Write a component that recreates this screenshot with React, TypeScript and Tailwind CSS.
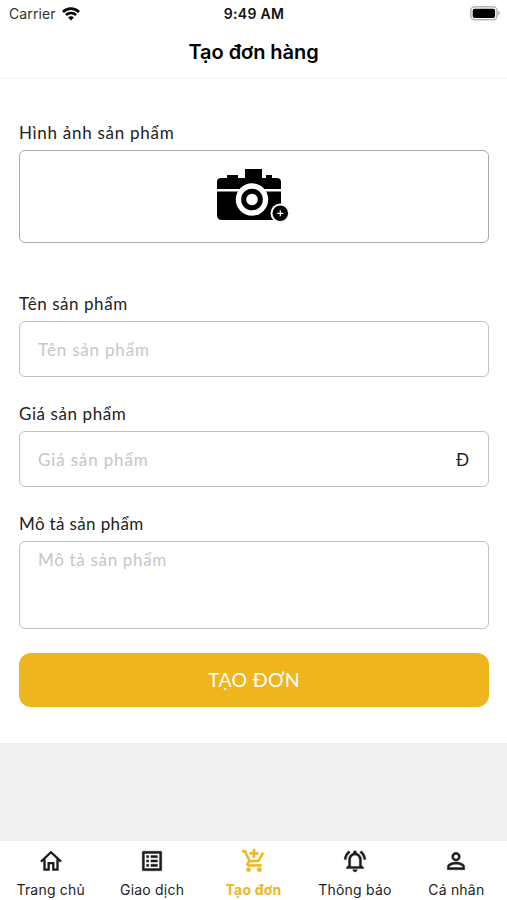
import type { ReactNode } from "react";
import {
  MdOutlineAddShoppingCart,
  MdOutlineListAlt,
  MdOutlineNotificationsActive,
  MdPersonOutline,
} from "react-icons/md";

function StatusBar() {
  return (
    <div className="flex h-[27px] items-center justify-between pr-[6px] pl-[9px] text-[14px] leading-[27px]">
      <div className="flex flex-1 items-center gap-[6px]">
        <span className="tracking-[0.1px] text-[#333]">Carrier</span>
        <svg width="18" height="14" viewBox="0 0 18 14" fill="none" stroke="#000" strokeWidth="2.7">
          <path d="M1 4.9C5.5.6 12.5.6 17 4.9" />
          <path d="M3.9 8C6.8 5.3 11.2 5.3 14.1 8" />
          <path d="M6.2 10.4c1.6-1.5 4-1.5 5.6 0L9 13.4z" fill="#000" stroke="none" />
        </svg>
      </div>
      <span className="mr-[2px] font-semibold tracking-[0.3px] text-[#111]">9:49 AM</span>
      <div className="flex flex-1 justify-end">
        <svg width="31" height="15" viewBox="0 0 31 15">
          <rect x="0.8" y="0.8" width="26.2" height="13" rx="4" fill="#fff" stroke="#b5b5b5" strokeWidth="1.6" />
          <rect x="2.7" y="2.7" width="22.4" height="9.2" rx="2" fill="#000" />
          <path d="M28.3 5c2 .5 2 4.100 0 4.600z" fill="#aaa" />
        </svg>
      </div>
    </div>
  );
}

function CameraIcon() {
  return (
    <svg width="74" height="56" viewBox="0 0 74 56" className="relative -left-px">
      <path
        d="M1 20V13q0-4 4-4h6V6h11v3h7V0h17v9h4V6h6v3h5q4 0 4 4v7zM1 22.500h64V46q0 5-5 5H6q-5 0-5-5z"
        fill="#000"
      />
      <circle cx="36" cy="30.500" r="16.200" fill="#fff" />
      <circle cx="36" cy="30.500" r="8.300" fill="none" stroke="#000" strokeWidth="5" />
      <circle cx="64.300" cy="44.300" r="9.800" fill="#fff" />
      <circle cx="64.300" cy="44.300" r="7.800" fill="#000" />
      <path d="M61.300 44.300h6M64.300 41.300v6" stroke="#fff" strokeWidth="1.200" />
    </svg>
  );
}

function HomeIcon() {
  return (
    <svg width="28" height="28" viewBox="0 0 28 28" fill="none" stroke="currentColor" strokeWidth="2.5">
      <path d="M3.200 14.600 14 4.600l10.800 10" />
      <path d="M7 12v11.300h4.500v-7h5v7H21V12" />
    </svg>
  );
}

function Field({ label, labelClass, children }: { label: string; labelClass: string; children: ReactNode }) {
  return (
    <div>
      <div className={`h-[28px] text-[17px] leading-[22px] text-[#222] ${labelClass}`}>{label}</div>
      {children}
    </div>
  );
}

const box = "rounded-[6px] border border-[#c2c2c2] text-[17px] text-[#c6c6c6]";

// The icon set's invisible bounding path must stay unstroked.
const heavier = "stroke-current stroke-[0.4] [&_path[fill=none]]:stroke-none";

function Tab({ icon, label, active }: { icon: ReactNode; label: string; active?: boolean }) {
  return (
    <div className={`flex flex-1 flex-col items-center ${active ? "font-bold text-[#efb61f]" : "text-[#1c1c1c]"}`}>
      {icon}
      <span className="mt-[6px] text-[14px] leading-[20px] tracking-[0.2px] whitespace-nowrap">{label}</span>
    </div>
  );
}

export default function App() {
  return (
    <div className="flex h-[900px] w-[507px] flex-col overflow-hidden bg-[#f0f0f0] font-['Inter','Liberation_Sans',sans-serif] text-black">
      <header className="h-[79px] border-b border-[#f3f3f3] bg-white">
        <StatusBar />
        <h1 className="text-center text-[20px] leading-[51px] font-semibold tracking-[-0.05px]">Tạo đơn hàng</h1>
      </header>
      <main className="h-[664px] bg-white pt-[43px] pr-[18px] pl-[19px] font-['Lato','Open_Sans',sans-serif]">
        <Field label="Hình ảnh sản phẩm" labelClass="tracking-[0.72px]">
          <div className="flex h-[93px] justify-center rounded-[6px] border border-[#aaa] pt-[18px]">
            <CameraIcon />
          </div>
        </Field>
        <div className="mt-[50px]">
          <Field label="Tên sản phẩm" labelClass="tracking-[0.55px]">
            <div className={`flex h-[56px] items-center px-[18px] pt-px ${box}`}>
              <span className="tracking-[0.8px]">Tên sản phẩm</span>
            </div>
          </Field>
        </div>
        <div className="mt-[26px]">
          <Field label="Giá sản phẩm" labelClass="tracking-[0.58px]">
            <div className={`flex h-[56px] items-center justify-between pr-[19px] pl-[18px] pt-px ${box}`}>
              <span className="tracking-[0.85px]">Giá sản phẩm</span>
              <span className="text-[#222]">Đ</span>
            </div>
          </Field>
        </div>
        <div className="mt-[26px]">
          <Field label="Mô tả sản phẩm" labelClass="tracking-[0.36px]">
            <div className={`h-[88px] px-[18px] pt-[7px] leading-[22px] ${box}`}>
              <span className="tracking-[0.68px]">Mô tả sản phẩm</span>
            </div>
          </Field>
        </div>
        <button className="mt-[24px] block h-[54px] w-full rounded-[12px] bg-[#eeb51f] text-[19.5px] tracking-[0.3px] text-white">
          TẠO ĐƠN
        </button>
      </main>
      <nav className="mt-auto flex h-[59px] bg-white pt-[7px]">
        <Tab icon={<HomeIcon />} label="Trang chủ" />
        <Tab icon={<MdOutlineListAlt size={28} className={heavier} />} label="Giao dịch" />
        <Tab icon={<MdOutlineAddShoppingCart size={28} className={heavier} />} label="Tạo đơn" active />
        <Tab icon={<MdOutlineNotificationsActive size={28} className={heavier} />} label="Thông báo" />
        <Tab icon={<MdPersonOutline size={28} className={heavier} />} label="Cá nhân" />
      </nav>
    </div>
  );
}
